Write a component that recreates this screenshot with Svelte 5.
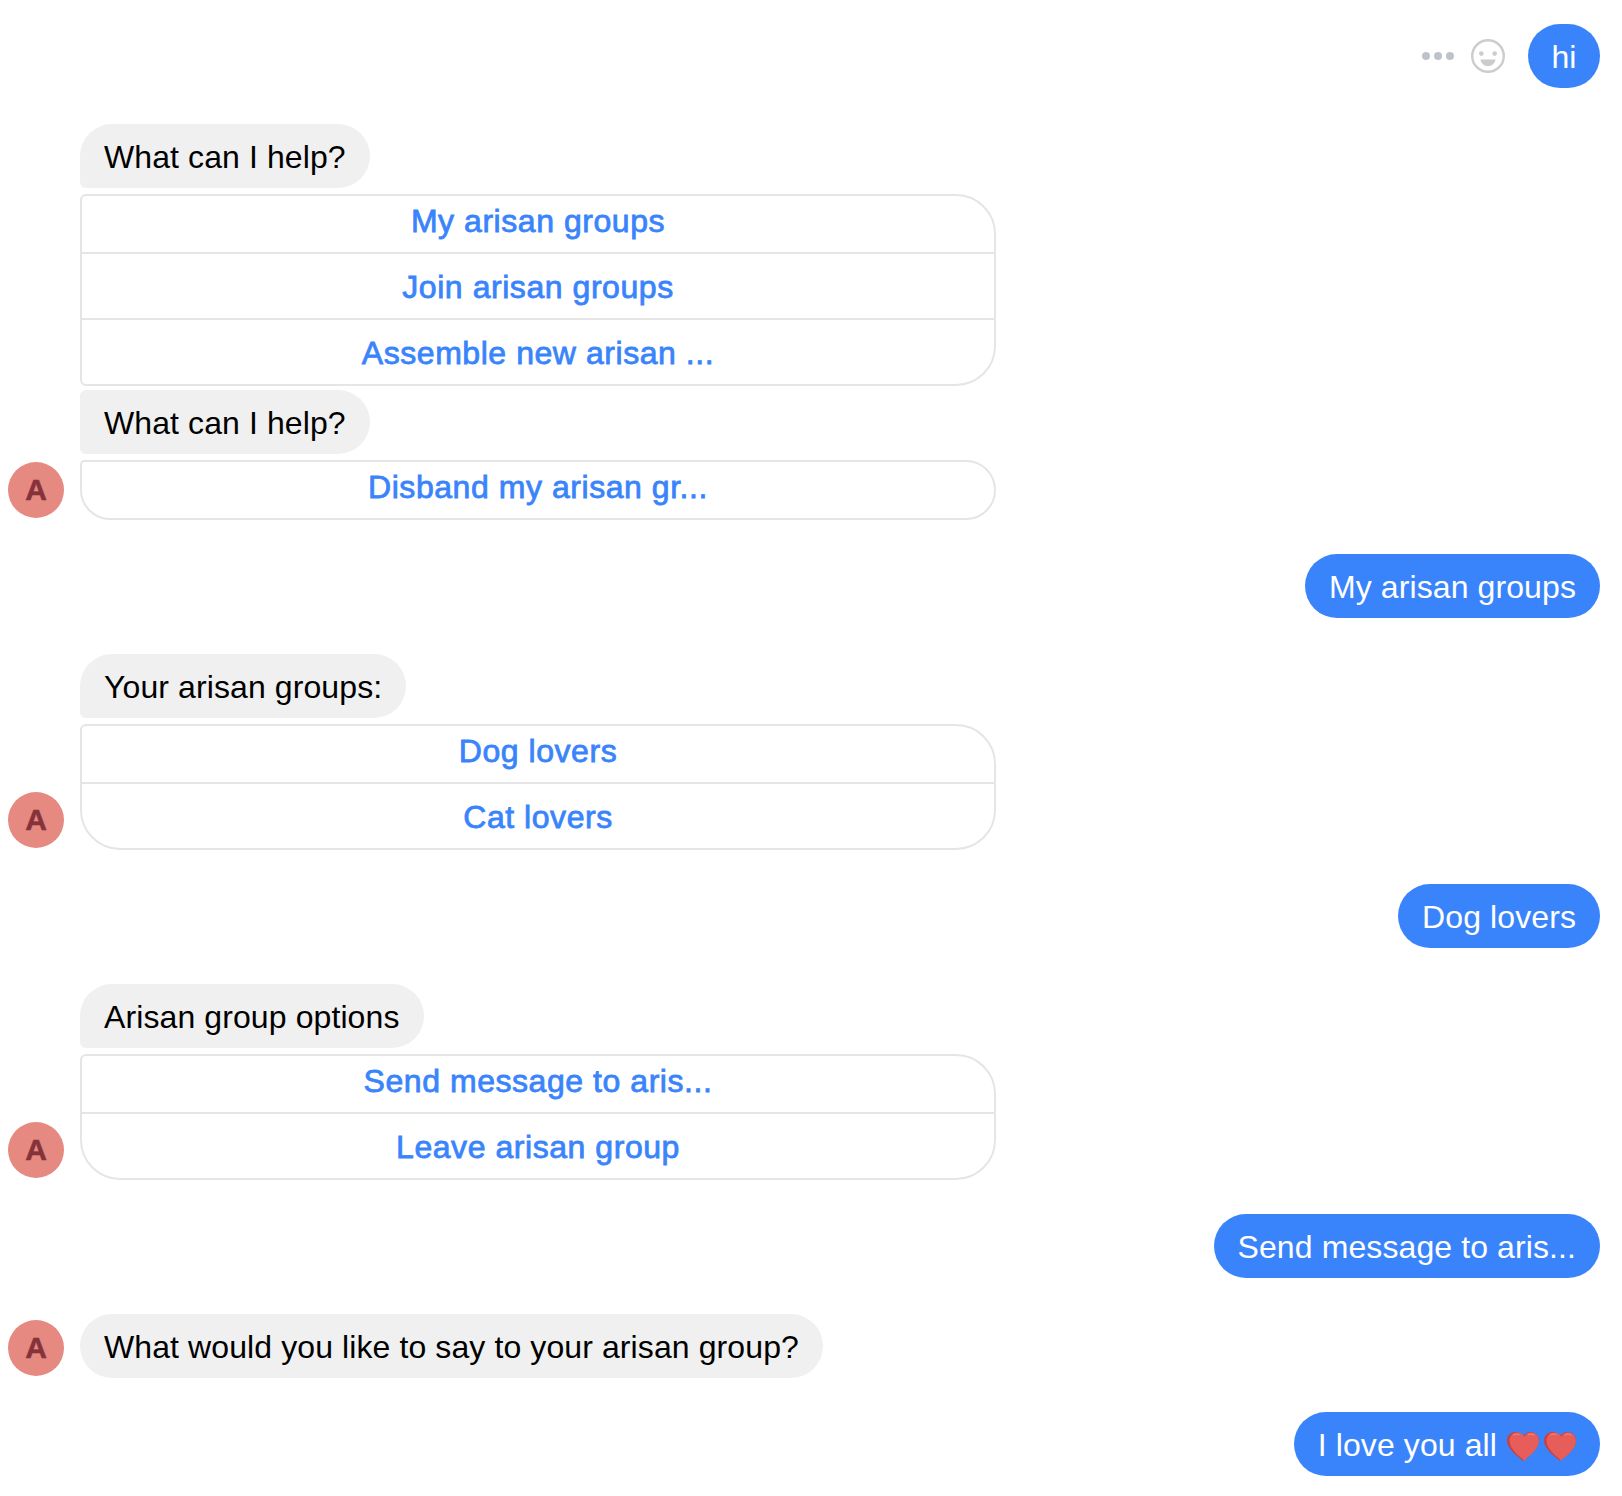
<script lang="ts">
	type Block =
		| { kind: 'user'; text: string; hearts?: boolean; tools?: boolean }
		| { kind: 'bot'; parts: { text: string; options?: string[]; joined?: boolean }[] };

	const heartPath =
		'M16 29C13 25.500 0 18 0 8.500 0 3.500 4 0 8.500 0 11.500 0 14.500 1.500 16 4.500 17.500 1.500 20.500 0 23.500 0 28 0 32 3.500 32 8.500 32 18 19 25.500 16 29Z';

	const blocks: Block[] = [
		{ kind: 'user', text: 'hi', tools: true },
		{
			kind: 'bot',
			parts: [
				{ text: 'What can I help?', options: ['My arisan groups', 'Join arisan groups', 'Assemble new arisan ...'], joined: true },
				{ text: 'What can I help?', options: ['Disband my arisan gr...'] }
			]
		},
		{ kind: 'user', text: 'My arisan groups' },
		{ kind: 'bot', parts: [{ text: 'Your arisan groups:', options: ['Dog lovers', 'Cat lovers'] }] },
		{ kind: 'user', text: 'Dog lovers' },
		{ kind: 'bot', parts: [{ text: 'Arisan group options', options: ['Send message to aris...', 'Leave arisan group'] }] },
		{ kind: 'user', text: 'Send message to aris...' },
		{ kind: 'bot', parts: [{ text: 'What would you like to say to your arisan group?' }] },
		{ kind: 'user', text: 'I love you all', hearts: true }
	];
</script>

{#snippet heart()}
	<svg class="heart" width="32" height="29" viewBox="0 0 32 29" aria-hidden="true">
		<path d={heartPath} fill="#c8413f" />
		<path d={heartPath} fill="#e65d59" transform="translate(2.500 0.500) scale(0.92 0.98)" />
		<path d="M6 3.200C8 1.800 10.500 1.800 12.500 3M21 2.800C23 1.800 25.500 1.800 27.500 3.200" fill="none" stroke="#f08a84" stroke-width="1" />
	</svg>
{/snippet}

<main class="chat">
	{#each blocks as block}
		{#if block.kind === 'user'}
			<div class="user-row">
				{#if block.tools}
					<span class="dots" aria-hidden="true"><i></i><i></i><i></i></span>
					<svg class="smile" width="36" height="36" viewBox="0 0 36 36" fill="none" aria-hidden="true">
						<circle cx="18" cy="18" r="15.800" stroke="#cccccc" stroke-width="2.400" />
						<circle cx="11.300" cy="15.600" r="2.300" fill="#cccccc" />
						<circle cx="24.700" cy="15.600" r="2.300" fill="#cccccc" />
						<path d="M10.500 21.600h15c-.6 4-3.500 6.600-7.500 6.600s-6.900-2.600-7.500-6.600Z" fill="#cccccc" />
					</svg>
				{/if}
				<div class="bubble bubble--user" class:bubble--short={block.tools}>
					{block.text}
					{#if block.hearts}
						<span class="hearts">{@render heart()}{@render heart()}</span>
					{/if}
				</div>
			</div>
		{:else}
			<div class="bot-row">
				<div class="avatar-col">
					<div class="avatar">A</div>
				</div>
				<div class="stack">
					{#each block.parts as part, p}
						<div class="bubble bubble--bot" class:bubble--follow={p > 0} class:bubble--alone={!part.options}>{part.text}</div>
						{#if part.options}
							<div class="card" class:card--joined={part.joined}>
								{#each part.options as option}
									<div class="card__row">{option}</div>
								{/each}
							</div>
						{/if}
					{/each}
				</div>
			</div>
		{/if}
	{/each}
</main>

<style>
	:global(body) {
		background: #fff;
	}

	.chat {
		display: flex;
		flex-direction: column;
		padding: 24px 22px 20px 8px;
		font-family: 'Liberation Sans', Arial, sans-serif;
		font-size: 32px;
		letter-spacing: 0.1px;
		line-height: 36px;
	}

	.user-row {
		display: flex;
		justify-content: flex-end;
		align-items: center;
		margin-bottom: 36px;
	}

	.bot-row {
		display: flex;
		gap: 16px;
		margin-bottom: 34px;
	}

	.avatar-col {
		display: flex;
		align-items: flex-end;
		padding-bottom: 2px;
	}

	.avatar {
		width: 56px;
		height: 56px;
		border-radius: 50%;
		background: #e68980;
		color: #85323a;
		font-weight: 700;
		font-size: 30px;
		line-height: 55px;
		letter-spacing: 0;
		text-align: center;
		-webkit-text-stroke: 0.5px currentColor;
	}

	.stack {
		display: flex;
		flex-direction: column;
		align-items: flex-start;
		gap: 6px;
		width: 916px;
	}

	.bubble {
		box-sizing: border-box;
		height: 64px;
		padding: 15px 24px 13px;
		border-radius: 32px;
		white-space: nowrap;
	}

	.bubble--user {
		display: flex;
		align-items: center;
		background: #3a84fb;
		color: #fff;
	}

	.bubble--short {
		padding-inline: 23.500px;
	}

	.bubble--bot {
		background: #f0f0f0;
		color: #000;
		border-bottom-left-radius: 6px;
	}

	.bubble--follow {
		margin-top: -2px;
		border-top-left-radius: 6px;
	}

	.bubble--alone {
		border-bottom-left-radius: 32px;
	}

	.dots {
		display: flex;
		gap: 4px;
		margin-right: 16px;
	}

	.dots i {
		width: 8px;
		height: 8px;
		border-radius: 50%;
		background: #bec2c9;
	}

	.smile {
		margin-right: 22px;
	}

	.hearts {
		display: flex;
		gap: 5px;
		margin: 3px 0 0 10px;
	}

	.card {
		box-sizing: border-box;
		width: 100%;
		border: 2px solid #e5e5e5;
		border-radius: 6px 40px 40px 40px;
		color: #3a84fb;
		text-align: center;
		letter-spacing: 0.55px;
		-webkit-text-stroke: 0.8px currentColor;
	}

	.card--joined {
		border-bottom-left-radius: 6px;
	}

	.card__row {
		height: 64px;
		box-sizing: border-box;
		padding-top: 15px;
	}

	.card__row:first-child {
		height: 56px;
		padding-top: 7px;
	}

	.card__row + .card__row {
		border-top: 2px solid #e5e5e5;
		height: 66px;
	}
</style>
